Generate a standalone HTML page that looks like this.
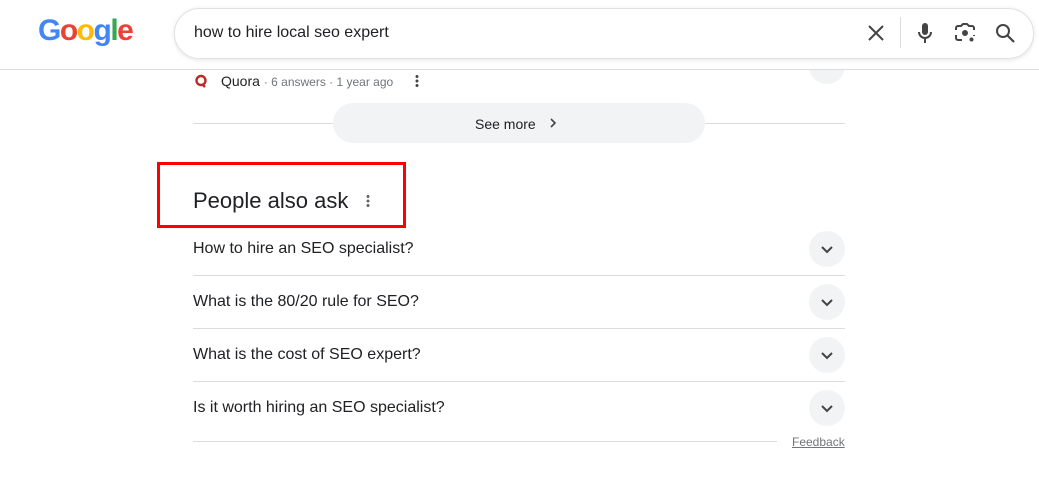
<!DOCTYPE html>
<html><head><style>
body{margin:0;width:1039px;height:488px;background:#fff;font-family:"Liberation Sans",Arial,sans-serif;position:relative;overflow:hidden;color:#202124}
.a{position:absolute}
.q{position:absolute;left:193px;font-size:16px;color:#202124}
.hr{position:absolute;left:193px;width:652px;height:1px;background:#dadce0}
.chev{position:absolute;left:809px;width:36px;height:36px;border-radius:50%;background:#f1f3f4}
.chev svg{position:absolute;left:9px;top:9px}
</style></head><body>
<div class="chev" style="top:48px"></div>
<div class="a" style="left:0;top:0;width:1039px;height:69px;background:#fff;border-bottom:1px solid #dadce0"></div>
<div class="a" style="left:38px;top:14px;font-size:30px;font-weight:bold;letter-spacing:-1.5px;font-family:'Liberation Sans',sans-serif"><span style="color:#4285f4">G</span><span style="color:#ea4335">o</span><span style="color:#fbbc05">o</span><span style="color:#4285f4">g</span><span style="color:#34a853">l</span><span style="color:#ea4335">e</span></div>
<div class="a" style="left:174px;top:8px;width:858px;height:49px;border:1px solid #dfe1e5;border-radius:26px;box-shadow:0 1px 4px rgba(32,33,36,.12)"></div>
<div class="a" style="left:194px;top:24px;font-size:16px;color:#202124">how to hire local seo expert</div>
<svg class="a" style="left:866px;top:23px" width="20" height="20" viewBox="0 0 20 20"><path d="M3 3L17 17M17 3L3 17" stroke="#444" stroke-width="2"/></svg>
<div class="a" style="left:900px;top:17px;width:1px;height:31px;background:#dadce0"></div>
<svg class="a" style="left:914px;top:22px" width="22" height="22" viewBox="0 0 22 22"><rect x="8" y="1" width="6" height="12" rx="3" fill="#444"/><path d="M5 10a6 6 0 0 0 12 0M11 16v5" stroke="#444" stroke-width="2" fill="none"/></svg>
<svg class="a" style="left:954px;top:22px" width="22" height="22" viewBox="0 0 22 22"><path d="M2 8V6a2 2 0 0 1 2-2h3l2-2h4l2 2h3a2 2 0 0 1 2 2v2M2 13v3a2 2 0 0 0 2 2h4M20 13v1" stroke="#444" stroke-width="2" fill="none"/><circle cx="11" cy="11" r="3" fill="#444"/><circle cx="17.5" cy="17.5" r="2" fill="#444"/></svg>
<svg class="a" style="left:994px;top:22px" width="22" height="22" viewBox="0 0 22 22"><circle cx="9" cy="9" r="6" stroke="#444" stroke-width="2" fill="none"/><path d="M13.5 13.5L20 20" stroke="#444" stroke-width="2.2"/></svg>

<svg class="a" style="left:194px;top:74px" width="14" height="14" viewBox="0 0 14 14"><circle cx="7" cy="6.5" r="4.5" stroke="#b92b27" stroke-width="2.4" fill="none"/><path d="M8 10l3 3" stroke="#b92b27" stroke-width="2.4"/></svg>
<div class="a" style="left:221px;top:73px;font-size:14px;color:#202124">Quora <span style="font-size:12px;color:#70757a">· 6 answers · 1 year ago</span></div>
<svg class="a" style="left:413px;top:74px" width="8" height="14"><circle cx="4" cy="2.5" r="1.5" fill="#444"/><circle cx="4" cy="7" r="1.5" fill="#444"/><circle cx="4" cy="11.5" r="1.5" fill="#444"/></svg>

<div class="hr" style="top:123px"></div>
<div class="a" style="left:333px;top:103px;width:372px;height:40px;border-radius:20px;background:#f1f3f4"></div>
<div class="a" style="left:475px;top:116px;font-size:14px;color:#202124">See more</div>
<svg class="a" style="left:546px;top:116px" width="14" height="14" viewBox="0 0 14 14"><path d="M5 3l4 4-4 4" stroke="#444" stroke-width="1.6" fill="none"/></svg>

<div class="a" style="left:157px;top:162px;width:243px;height:60px;border:3px solid #f00"></div>
<div class="a" style="left:193px;top:188px;font-size:22px;color:#202124">People also ask</div>
<svg class="a" style="left:364px;top:194px" width="8" height="14"><circle cx="4" cy="2.5" r="1.5" fill="#5f6368"/><circle cx="4" cy="7" r="1.5" fill="#5f6368"/><circle cx="4" cy="11.5" r="1.5" fill="#5f6368"/></svg>

<div class="q" style="top:240px">How to hire an SEO specialist?</div>
<div class="chev" style="top:231px"><svg width="18" height="18" viewBox="0 0 18 18"><path d="M4 7l5 5 5-5" stroke="#444" stroke-width="2" fill="none"/></svg></div>
<div class="hr" style="top:275px"></div>
<div class="q" style="top:293px">What is the 80/20 rule for SEO?</div>
<div class="chev" style="top:284px"><svg width="18" height="18" viewBox="0 0 18 18"><path d="M4 7l5 5 5-5" stroke="#444" stroke-width="2" fill="none"/></svg></div>
<div class="hr" style="top:328px"></div>
<div class="q" style="top:346px">What is the cost of SEO expert?</div>
<div class="chev" style="top:337px"><svg width="18" height="18" viewBox="0 0 18 18"><path d="M4 7l5 5 5-5" stroke="#444" stroke-width="2" fill="none"/></svg></div>
<div class="hr" style="top:381px"></div>
<div class="q" style="top:399px">Is it worth hiring an SEO specialist?</div>
<div class="chev" style="top:390px"><svg width="18" height="18" viewBox="0 0 18 18"><path d="M4 7l5 5 5-5" stroke="#444" stroke-width="2" fill="none"/></svg></div>
<div class="hr" style="top:441px;width:584px"></div>
<div class="a" style="left:792px;top:435px;font-size:12px;color:#70757a;text-decoration:underline">Feedback</div>
</body></html>
